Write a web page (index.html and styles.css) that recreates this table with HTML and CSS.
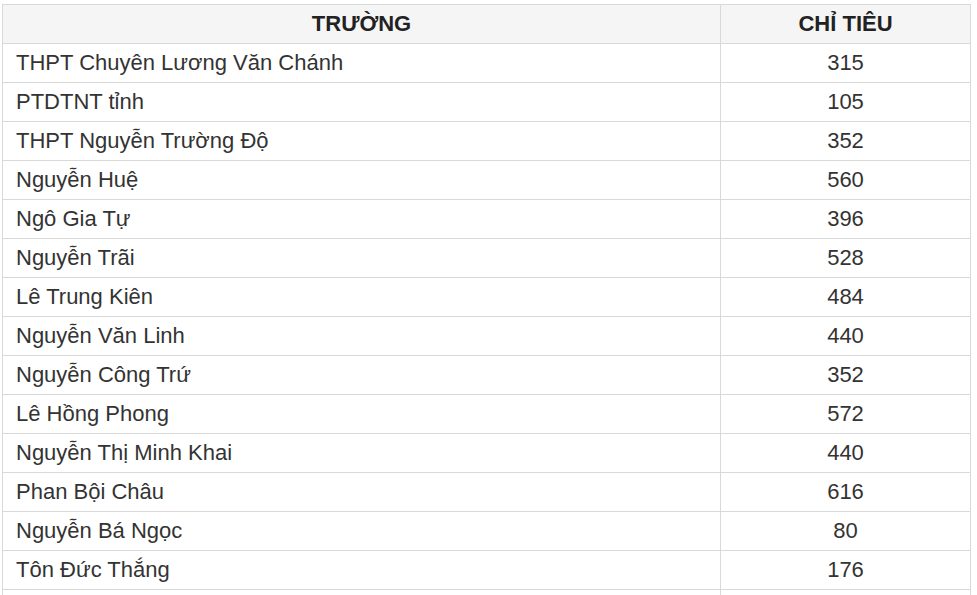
FILE: index.html
```html
<!DOCTYPE html>
<html lang="vi">
<head>
<meta charset="utf-8">
<title>Chỉ tiêu</title>
<link rel="stylesheet" href="styles.css">
</head>
<body>
<table class="quota">
  <thead>
    <tr><th class="col-name">TRƯỜNG</th><th class="col-num">CHỈ TIÊU</th></tr>
  </thead>
  <tbody>
    <tr><td>THPT Chuyên Lương Văn Chánh</td><td class="num">315</td></tr>
    <tr><td>PTDTNT tỉnh</td><td class="num">105</td></tr>
    <tr><td>THPT Nguyễn Trường Độ</td><td class="num">352</td></tr>
    <tr><td>Nguyễn Huệ</td><td class="num">560</td></tr>
    <tr><td>Ngô Gia Tự</td><td class="num">396</td></tr>
    <tr><td>Nguyễn Trãi</td><td class="num">528</td></tr>
    <tr><td>Lê Trung Kiên</td><td class="num">484</td></tr>
    <tr><td>Nguyễn Văn Linh</td><td class="num">440</td></tr>
    <tr><td>Nguyễn Công Trứ</td><td class="num">352</td></tr>
    <tr><td>Lê Hồng Phong</td><td class="num">572</td></tr>
    <tr><td>Nguyễn Thị Minh Khai</td><td class="num">440</td></tr>
    <tr><td>Phan Bội Châu</td><td class="num">616</td></tr>
    <tr><td>Nguyễn Bá Ngọc</td><td class="num">80</td></tr>
    <tr><td>Tôn Đức Thắng</td><td class="num">176</td></tr>
    <tr><td>&nbsp;</td><td class="num">&nbsp;</td></tr>
  </tbody>
</table>
</body>
</html>
```
FILE: styles.css
```css
html, body {
  margin: 0;
  background: #ffffff;
}
body {
  padding: 4px 0 0 2px;
  font-family: "Liberation Sans", Arial, sans-serif;
  color: #333333;
}
.quota {
  border-collapse: collapse;
  width: 969px;
  table-layout: fixed;
  font-size: 22px;
  line-height: 22px;
}
.quota th, .quota td {
  border: 1px solid #d9d9d9;
  padding: 8px 13px;
  height: 22px;
}
.quota th {
  background: #f5f5f5;
  font-weight: bold;
  text-align: center;
  color: #222222;
}
.quota td {
  background: #ffffff;
  text-align: left;
}
.quota td.num {
  text-align: center;
}
.col-name {
  width: 718px;
  box-sizing: border-box;
}
.col-num {
  width: auto;
}
```
